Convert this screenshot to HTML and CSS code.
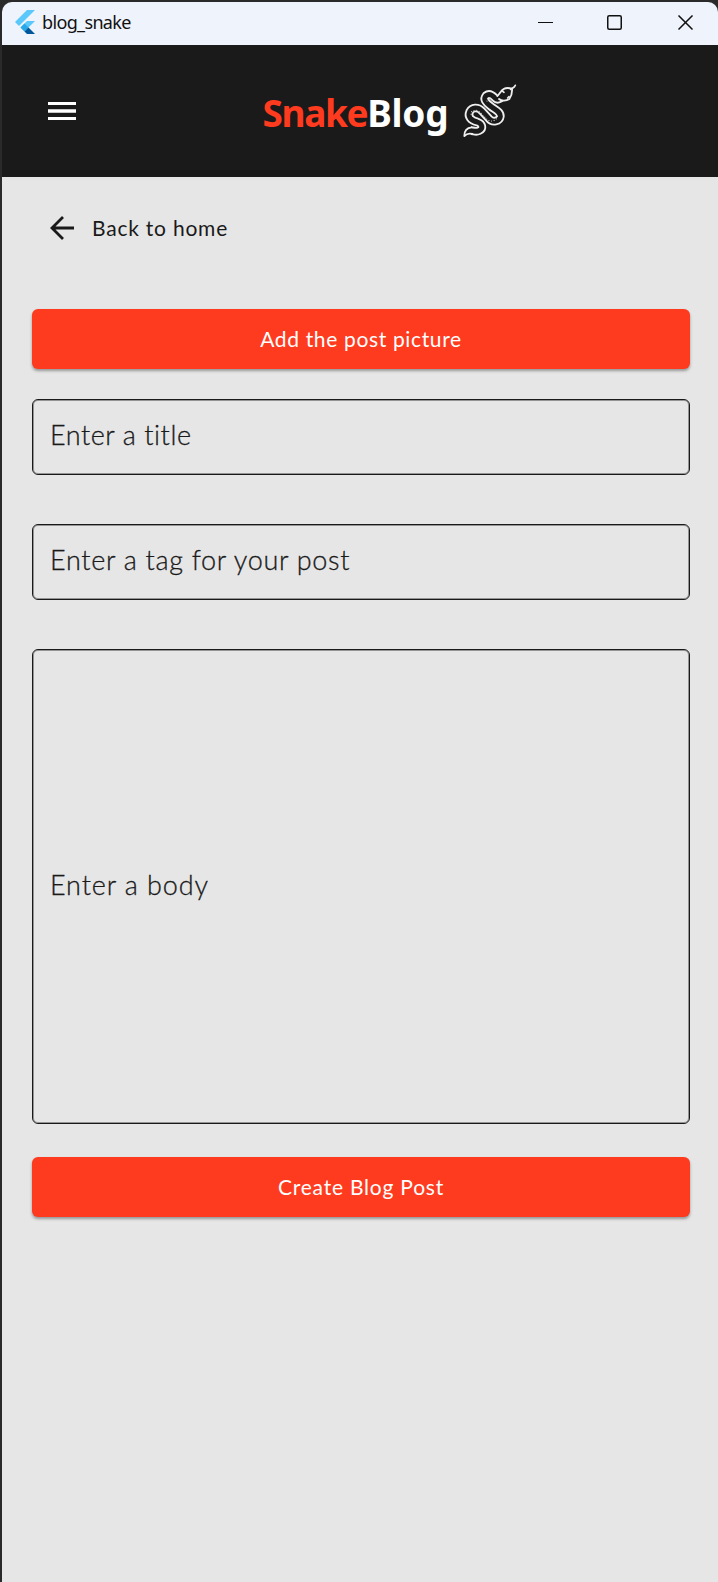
FILE: index.html
```html
<!DOCTYPE html>
<html lang="en">
<head>
<meta charset="utf-8">
<title>blog_snake</title>
<link rel="stylesheet" href="styles.css">
</head>
<body>
<div class="window">
  <div class="titlebar">
    <svg class="app-logo" viewBox="0 0 20 24"><path fill="#5ac8fa" d="M12 0H20L4 16 0 12Z"/><path fill="#5ac8fa" d="M12 11H20L13.5 17.5 9.5 21.5 5.5 17.5Z"/><path fill="#28a8e8" d="M5.5 17.5 9.5 13.5 13.5 17.5 9.5 21.5Z"/><path fill="#01579b" d="M9.5 21.5 13.5 17.5 20 24H12Z"/></svg>
    <span class="app-name">blog_snake</span>
    <svg class="controls" viewBox="0 0 156 16" fill="none" stroke="#111" stroke-width="1.5"><path stroke-width="1" d="M0 7.5H15"/><rect x="69.75" y=".75" width="13.5" height="13.5" rx="1.5"/><path d="M140.5 .5 154.5 14.500M154.500 .5 140.5 14.500"/></svg>
  </div>
  <header class="header">
    <svg class="menu" viewBox="0 0 28 18" fill="#fff"><path d="M0 0H28V3H0zM0 7.300H28V10.700H0zM0 15H28V18H0z"/></svg>
    <div class="brand"><span class="red">Snake</span><span class="white">Blog</span></div>
    <svg class="snake" viewBox="0 0 210 192" fill="none" stroke-linecap="round" stroke-linejoin="round">
      <path class="skin" d="M48 158C58 158 62 163 72 158 86 151 82 137 67 132 46 127 38 115 44 101 51 87 69 87 80 98L102 122C112 134 134 131 136 115 137 101 121 96 106 84 92 73 84 64 93 53 105 43 114 54 120 60 126 66 132 64 138 60"/>
      <path class="inside" d="M48 158C58 158 62 163 72 158 86 151 82 137 67 132 46 127 38 115 44 101 51 87 69 87 80 98L102 122C112 134 134 131 136 115 137 101 121 96 106 84 92 73 84 64 93 53 105 43 114 54 120 60 126 66 132 64 138 60"/>
      <path class="dots" d="M53 115C43 106 49 98 60 97 70 96 76 103 80 108L97 125C108 134 126 127 128 114"/>
      <path class="dots" d="M96 69C93 61 102 57 108 63"/>
      <path class="fill" d="M50 148C34 149 28 158 28 174 36 166 42 165 52 168"/>
      <path class="fill" d="M127 54C134 48 137 37 148 32 156 28 163 30 171 32 172 43 170 53 163 63 154 69 140 70 132 63"/>
      <path class="line" d="M167 34C172 29 178 31 181 22M142 39 147 43M158 60 162 56"/>
    </svg>
  </header>
  <main class="page">
    <div class="back">
      <svg class="arrow" viewBox="0 0 24 24" fill="none" stroke="#1a1a1a" stroke-width="2.800"><path d="M24 12H2M13 1 2 12 13 23"/></svg>
      <span>Back to home</span>
    </div>
    <div class="button first">Add the post picture</div>
    <div class="field title"><span>Enter a title</span></div>
    <div class="field tag"><span>Enter a tag for your post</span></div>
    <div class="field text"><span>Enter a body</span></div>
    <div class="button create">Create Blog Post</div>
  </main>
</div>
</body>
</html>
```
FILE: styles.css
```css
* { box-sizing: border-box; }
body { margin: 0; background: #2b2a2b; }
.window { height: 1582px; padding: 2px 0 0 2px; display: flex; flex-direction: column; background: #2b2a2b; }
.titlebar { height: 43px; flex: none; display: flex; align-items: center; background: #eff3fb; border-radius: 10px 10px 0 0; padding-left: 13px; }
.app-logo { width: 20px; height: 24px; margin-top: -3px; }
.app-name { font: 18px/24px "Noto Sans", sans-serif; color: #111; margin: -3px 0 0 7px; letter-spacing: -0.65px; }
.controls { width: 156px; height: 16px; margin: -1px 24px 0 auto; }
.header { height: 132px; flex: none; display: flex; background: #1a1a1a; padding-left: 46px; }
.menu { width: 28px; height: 18px; margin-top: 57px; flex: none; }
.brand { width: 185px; margin: 41px 0 0 186.5px; font: 700 37px/54px "Noto Sans", sans-serif; white-space: nowrap; }
.red { color: #ff3b1f; letter-spacing: -1.4px; }
.white { color: #fff; letter-spacing: -0.2px; }
.snake { width: 70px; height: 64px; margin: 33px 0 0 7.5px; flex: none; }
.skin { stroke: #eee; stroke-width: 26; stroke-linecap: butt; }
.inside { stroke: #1a1a1a; stroke-width: 15; stroke-linecap: butt; }
.dots { stroke: #ddd; stroke-width: 3.5; stroke-dasharray: 0 8; }
.fill { fill: #1a1a1a; stroke: #eee; stroke-width: 5.5; }
.line { stroke: #eee; stroke-width: 5; }
.page { flex: 1; background: #e6e6e6; padding: 38px 28px 0 30px; font-family: Lato, sans-serif; color: #1a1a1a; }
.back { height: 28px; display: flex; align-items: center; padding-left: 18px; font-size: 21px; gap: 18px; letter-spacing: 0.78px; }
.back span { margin-top: -3px; }
.arrow { width: 24px; height: 24px; margin-top: -2px; }
.button { height: 60px; border-radius: 6px; background: #ff3b1f; color: #fff; font-size: 21px; letter-spacing: 0.65px; padding-bottom: 1px; display: flex; align-items: center; justify-content: center; box-shadow: 0 2px 3px rgba(0,0,0,.35); }
.first { margin-top: 66px; }
.field { height: 76px; border: 1px solid #1a1a1a; box-shadow: inset 0 0 0 1px rgba(26,26,26,.4); border-radius: 6px; padding: 0 17px 5px; display: flex; align-items: center; font-size: 27px; font-weight: 300; -webkit-text-stroke: 0.3px #1a1a1a; }
.title { margin-top: 30px; letter-spacing: 0.55px; }
.tag { margin-top: 49px; letter-spacing: 0.7px; }
.text { margin-top: 49px; height: 475px; letter-spacing: 0.9px; }
.create { margin-top: 33px; letter-spacing: 0.78px; }
```
